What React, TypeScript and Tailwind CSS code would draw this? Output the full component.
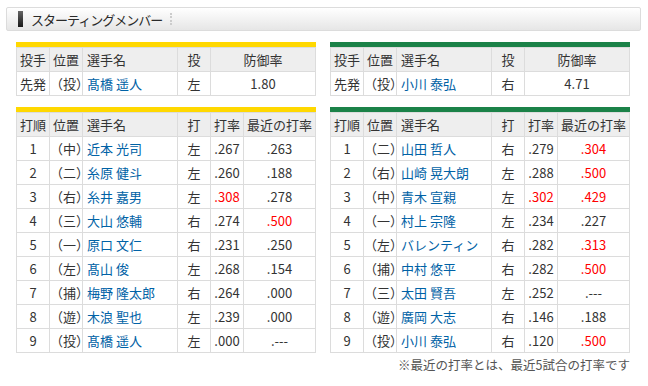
import React from "react";

type Pitcher = { pos: string; name: string; hand: string; era: string };
type Batter = {
  pos: string;
  name: string;
  hand: string;
  avg: string;
  recent: string;
  avgHot?: boolean;
  recentHot?: boolean;
};

const tigersPitcher: Pitcher = { pos: "（投）", name: "髙橋 遥人", hand: "左", era: "1.80" };
const swallowsPitcher: Pitcher = { pos: "（投）", name: "小川 泰弘", hand: "右", era: "4.71" };

const tigers: Batter[] = [
  { pos: "（中）", name: "近本 光司", hand: "左", avg: ".267", recent: ".263" },
  { pos: "（二）", name: "糸原 健斗", hand: "左", avg: ".260", recent: ".188" },
  { pos: "（右）", name: "糸井 嘉男", hand: "左", avg: ".308", recent: ".278", avgHot: true },
  { pos: "（三）", name: "大山 悠輔", hand: "右", avg: ".274", recent: ".500", recentHot: true },
  { pos: "（一）", name: "原口 文仁", hand: "右", avg: ".231", recent: ".250" },
  { pos: "（左）", name: "髙山 俊", hand: "左", avg: ".268", recent: ".154" },
  { pos: "（捕）", name: "梅野 隆太郎", hand: "右", avg: ".264", recent: ".000" },
  { pos: "（遊）", name: "木浪 聖也", hand: "左", avg: ".239", recent: ".000" },
  { pos: "（投）", name: "髙橋 遥人", hand: "左", avg: ".000", recent: ".---" },
];

const swallows: Batter[] = [
  { pos: "（二）", name: "山田 哲人", hand: "右", avg: ".279", recent: ".304", recentHot: true },
  { pos: "（右）", name: "山崎 晃大朗", hand: "左", avg: ".288", recent: ".500", recentHot: true },
  { pos: "（中）", name: "青木 宣親", hand: "左", avg: ".302", recent: ".429", avgHot: true, recentHot: true },
  { pos: "（一）", name: "村上 宗隆", hand: "左", avg: ".234", recent: ".227" },
  { pos: "（左）", name: "バレンティン", hand: "右", avg: ".282", recent: ".313", recentHot: true },
  { pos: "（捕）", name: "中村 悠平", hand: "右", avg: ".282", recent: ".500", recentHot: true },
  { pos: "（三）", name: "太田 賢吾", hand: "左", avg: ".252", recent: ".---" },
  { pos: "（遊）", name: "廣岡 大志", hand: "右", avg: ".146", recent: ".188" },
  { pos: "（投）", name: "小川 泰弘", hand: "右", avg: ".120", recent: ".500", recentHot: true },
];

const th = "h-[24px] border border-[#dcdcdc] bg-[#eeeeee] font-normal p-0";
const td = "h-[24px] border border-[#dcdcdc] p-0";

function PitcherTable({ p, bar }: { p: Pitcher; bar: string }) {
  return (
    <div className="w-[300px]">
      <div className={`h-[5px] ${bar}`} />
      <table className="w-[300px] border-collapse table-fixed">
        <colgroup>
          <col className="w-[33px]" />
          <col className="w-[33px]" />
          <col className="w-[95px]" />
          <col className="w-[33px]" />
          <col />
        </colgroup>
        <thead>
          <tr>
            <th className={`${th} text-center`}>投手</th>
            <th className={`${th} text-center`}>位置</th>
            <th className={`${th} text-left pl-[4px]`}>選手名</th>
            <th className={`${th} text-center`}>投</th>
            <th className={`${th} text-center`}>防御率</th>
          </tr>
        </thead>
        <tbody>
          <tr>
            <td className={`${td} text-center`}>先発</td>
            <td className={`${td} text-center`}>{p.pos}</td>
            <td className={`${td} pl-[4px] text-[#0062a6]`}>{p.name}</td>
            <td className={`${td} text-center`}>{p.hand}</td>
            <td className={`${td} text-center`}>{p.era}</td>
          </tr>
        </tbody>
      </table>
    </div>
  );
}

function LineupTable({ rows, bar }: { rows: Batter[]; bar: string }) {
  return (
    <div className="w-[300px]">
      <div className={`h-[5px] ${bar}`} />
      <table className="w-[300px] border-collapse table-fixed">
        <colgroup>
          <col className="w-[33px]" />
          <col className="w-[33px]" />
          <col className="w-[95px]" />
          <col className="w-[33px]" />
          <col className="w-[33px]" />
          <col />
        </colgroup>
        <thead>
          <tr>
            <th className={`${th} text-center`}>打順</th>
            <th className={`${th} text-center`}>位置</th>
            <th className={`${th} text-left pl-[4px]`}>選手名</th>
            <th className={`${th} text-center`}>打</th>
            <th className={`${th} text-center`}>打率</th>
            <th className={`${th} text-center`}>最近の打率</th>
          </tr>
        </thead>
        <tbody>
          {rows.map((r, i) => (
            <tr key={i}>
              <td className={`${td} text-center`}>{i + 1}</td>
              <td className={`${td} text-center`}>{r.pos}</td>
              <td className={`${td} pl-[4px] text-[#0062a6]`}>{r.name}</td>
              <td className={`${td} text-center`}>{r.hand}</td>
              <td className={`${td} text-center ${r.avgHot ? "text-[#ff0000]" : ""}`}>{r.avg}</td>
              <td className={`${td} text-center ${r.recentHot ? "text-[#ff0000]" : ""}`}>{r.recent}</td>
            </tr>
          ))}
        </tbody>
      </table>
    </div>
  );
}

export default function App() {
  return (
    <div
      className="w-[648px] h-[386px] bg-white text-[13px] leading-none text-[#333333] overflow-hidden"
      style={{ fontFamily: '"Noto Sans CJK JP", "Liberation Sans", sans-serif' }}
    >
      <div className="pt-[7px] pl-[6px] pr-[7px]">
        <div className="h-[24px] border border-[#dcdcdc] rounded-[2px] bg-gradient-to-b from-white to-[#e6e6e6] flex items-center pl-[11px]">
          <div className="w-[5px] h-[16px] bg-gradient-to-b from-[#666666] to-[#1a1a1a]" />
          <span className="ml-[8px] text-[13px] tracking-[-1px] text-[#2a2a2a]">スターティングメンバー</span>
          <div className="ml-[8px] h-[12px] border-l-2 border-dotted border-[#cccccc]" />
        </div>
      </div>

      <div className="flex gap-[14px] pl-[16px] mt-[11px]">
        <PitcherTable p={tigersPitcher} bar="bg-[#ffd800]" />
        <PitcherTable p={swallowsPitcher} bar="bg-[#1b8248]" />
      </div>

      <div className="flex gap-[14px] pl-[16px] mt-[11px]">
        <LineupTable rows={tigers} bar="bg-[#ffd800]" />
        <LineupTable rows={swallows} bar="bg-[#1b8248]" />
      </div>

      <div className="w-[630px] text-right text-[12.5px] text-[#555555] mt-[6px]">
        ※最近の打率とは、最近5試合の打率です
      </div>
    </div>
  );
}
